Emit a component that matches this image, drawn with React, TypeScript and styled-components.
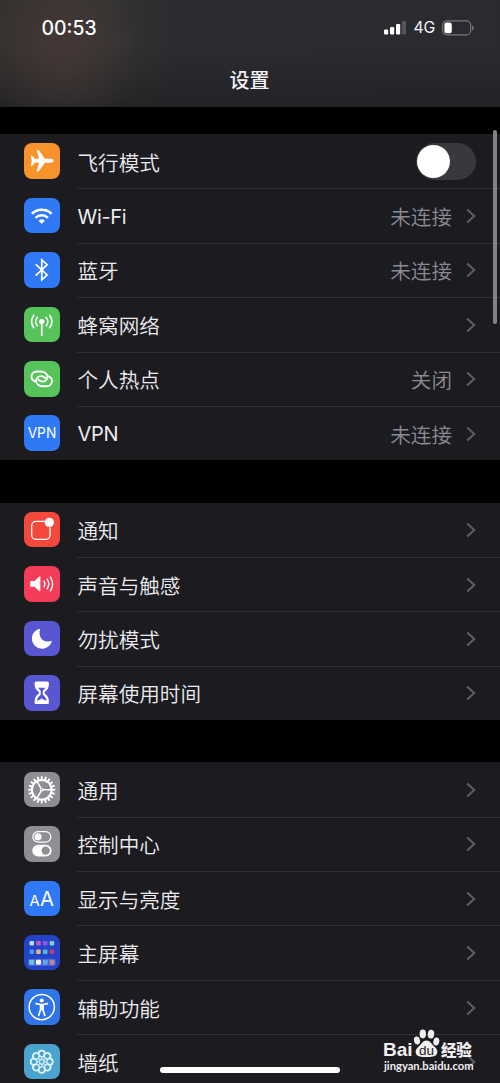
import React from 'react';
import styled, { createGlobalStyle } from 'styled-components';

const GlobalStyle = createGlobalStyle`
  * { box-sizing: border-box; }
  html, body { margin: 0; padding: 0; background: #000; }
  body { font-family: Inter, 'Noto Sans CJK SC', sans-serif; color: #ebebf0; }
`;

const Screen = styled.main`
  position: relative;
  width: 500px;
  height: 1083px;
  overflow: hidden;
  background: #000;
  display: flex;
  flex-direction: column;
`;

const Header = styled.header`
  flex: none;
  height: 107px;
  display: flex;
  flex-direction: column;
  background:
    radial-gradient(ellipse 75px 95px at 64px 48px, rgba(80, 60, 60, 0.6), rgba(80, 60, 60, 0.3) 50%, rgba(80, 60, 60, 0) 100%),
    linear-gradient(180deg, rgba(32, 31, 33, 0) 45%, rgba(32, 31, 33, 0.75) 100%),
    linear-gradient(90deg, #34312f 0, #333331 110px, #2c2b30 175px, #2b2a30 100%);
`;

const StatusBar = styled.div`
  height: 55px;
  padding: 0 26px 0 41.5px;
  display: flex;
  align-items: center;
  justify-content: space-between;
`;

const Clock = styled.span`
  font-size: 19.4px;
  font-weight: 500;
  color: #fff;
  letter-spacing: 0;
`;

const StatusIcons = styled.div`
  display: flex;
  align-items: center;
`;

const Network = styled.span`
  margin: 0 7px 0 7px;
  font-size: 15.8px;
  font-weight: 400;
  letter-spacing: -0.2px;
  color: #f4f4f6;
`;

const Title = styled.h1`
  margin: 10px 1px 0 0;
  text-align: center;
  font-size: 20px;
  line-height: 30px;
  font-weight: 500;
  font-family: 'Noto Sans CJK SC', sans-serif;
  color: #f4f2f8;
`;

const Content = styled.div`
  flex: 1;
  padding-top: 27px;
  display: flex;
  flex-direction: column;
  gap: 42.2px;
`;

const Group = styled.section`
  flex: none;
  background: #1c1b20;
`;

const Row = styled.div`
  height: 54.4px;
  padding-left: 24px;
  display: flex;
  align-items: center;
`;

const Tile = styled.div<{ $color: string }>`
  flex: none;
  width: 35.5px;
  height: 35.5px;
  border-radius: 8px;
  background: ${(p) => p.$color};
  svg { display: block; width: 100%; height: 100%; }
`;

const RowBody = styled.div<{ $line: boolean }>`
  flex: 1;
  align-self: stretch;
  margin-left: 17.5px;
  padding-right: 24px;
  display: flex;
  align-items: center;
  border-top: 1px solid ${(p) => (p.$line ? '#313035' : 'transparent')};
`;

const Label = styled.span<{ $latin?: boolean }>`
  flex: 1;
  padding-top: ${(p) => (p.$latin ? '1px' : '0')};
  font-family: ${(p) => (p.$latin ? 'Inter, sans-serif' : "'Noto Sans CJK SC', sans-serif")};
  font-weight: ${(p) => (p.$latin ? 400 : 350)};
  font-size: ${(p) => (p.$latin ? '20px' : '20.6px')};
  letter-spacing: ${(p) => (p.$latin ? '-0.3px' : '0')};
  line-height: 30px;
  margin-left: 0.5px;
`;

const Value = styled.span`
  margin-right: 14px;
  font-family: 'Noto Sans CJK SC', sans-serif;
  font-weight: 350;
  font-size: 20.6px;
  line-height: 30px;
  color: #8b8a90;
`;

const Switch = styled.div`
  width: 60px;
  height: 37.5px;
  padding: 2px 1px;
  border-radius: 19px;
  background: #39393d;
`;

const Thumb = styled.div`
  width: 33px;
  height: 33px;
  border-radius: 50%;
  background: #fff;
`;

const ScrollThumb = styled.div`
  position: absolute;
  top: 130px;
  right: 3px;
  width: 4px;
  height: 194px;
  border-radius: 2px;
  background: #838287;
`;

const HomeIndicator = styled.div`
  position: absolute;
  left: 160px;
  top: 1067px;
  width: 180px;
  height: 6px;
  border-radius: 3px;
  background: #fff;
`;

const Watermark = styled.div`
  position: absolute;
  left: 383px;
  top: 1029px;
  width: 92px;
  color: #efeff0;
`;

const BrandLine = styled.div`
  display: flex;
  align-items: flex-end;
  height: 30px;
`;

const BrandLatin = styled.span`
  width: 30px;
  font: 700 19px/18px 'Liberation Sans', sans-serif;
  letter-spacing: 0;
`;

const BrandHan = styled.span`
  font: 900 15.5px/19px 'Noto Sans CJK SC', sans-serif;
  letter-spacing: -0.3px;
  margin-left: 1px;
`;

const Paw = styled.svg`
  flex: none;
  width: 27px;
  height: 30px;
`;

const Site = styled.div`
  margin-left: 1px;
  font: 700 11.2px/14px Lato, sans-serif;
  white-space: nowrap;
`;

const Chevron = () => (
  <svg width="10" height="16" viewBox="0 0 10 16" fill="none">
    <path d="M1.2 1.4 8.2 8l-7 6.6" stroke="#5d5c62" strokeWidth="2.1" />
  </svg>
);

const Signal = () => (
  <svg width="23" height="15" viewBox="0 0 23 15" fill="#fff">
    <rect x="1" y="9.5" width="4.2" height="5" rx="1.2" />
    <rect x="7" y="7" width="4.2" height="7.5" rx="1.2" />
    <rect x="13" y="4" width="4.2" height="10.5" rx="1.2" />
    <rect x="18.800" y="1" width="4.2" height="13.500" rx="1.2" fill="#56555a" />
  </svg>
);

const Battery = () => (
  <svg width="32" height="16" viewBox="0 0 32 16">
    <rect x="0.7" y="0.9" width="28" height="14" rx="4.2" fill="none" stroke="#77767b" strokeWidth="1.2" />
    <rect x="2.4" y="2.6" width="7.4" height="10.6" rx="2.2" fill="#fff" />
    <path d="M30 5.6c1.4.6 1.8 1.4 1.8 2.3S31.400 9.700 30 10.300z" fill="#77767b" />
  </svg>
);

const S = { fill: 'none', stroke: '#fff', strokeLinecap: 'round' as const, strokeLinejoin: 'round' as const };

const Airplane = () => (
  <svg viewBox="0 0 36 36">
    <path
      fill="#fff"
      d="M30 18c0-1.300-1.500-2-3.200-2h-5.600L15 7.400h-2.300L15.400 16h-4.600L8.500 13H6.800l1.100 5-1.100 5h1.700l2.300-3h4.600l-2.700 8.600H15L21.200 20h5.600c1.700 0 3.200-.7 3.200-2z"
    />
  </svg>
);

const Wifi = () => (
  <svg viewBox="0 0 36 36">
    <g {...S} strokeWidth="2.600" strokeLinecap="butt">
      <path d="M8 16a14.300 14.300 0 0 1 20 0" />
      <path d="M11.700 20.200a8.900 8.900 0 0 1 12.600 0" />
    </g>
    <path fill="#fff" d="M14.900 23.100a4.500 4.500 0 0 1 6.200 0L18 26.300z" />
  </svg>
);

const Bluetooth = () => (
  <svg viewBox="0 0 36 36">
    <path {...S} strokeWidth="1.700" strokeLinejoin="miter" d="m12.300 12.800 11.200 10.500-5.500 4.900V8l5.500 4.900-11.200 10.500" />
  </svg>
);

const Cellular = () => (
  <svg viewBox="0 0 36 36">
    <circle cx="18" cy="14.800" r="2.700" fill="#fff" />
    <g {...S} strokeWidth="1.700">
      <path d="M18 15v13.600" />
      <path d="M13.500 10.600a6.300 6.300 0 0 0 0 8.400M22.500 10.600a6.300 6.300 0 0 1 0 8.400" />
      <path d="M9.900 8.600a9.800 9.800 0 0 0 0 12.400M26.100 8.600a9.800 9.800 0 0 1 0 12.400" />
    </g>
  </svg>
);

const Hotspot = () => (
  <svg viewBox="0 0 36 36">
    <g {...S} strokeWidth="1.900">
      <path d="M11.600 20.900c-2.400-.8-4-2.700-4-5.100 0-3 2.500-5.200 5.600-5.200h3.600c3.800 0 7 2.400 7 5.500 0 2.800-2.500 4.700-5.100 4.700-1.900 0-3.300-.7-4.300-2" />
      <path d="M24.400 15.300c2.400.8 4 2.700 4 5.100 0 3-2.500 5.200-5.600 5.200h-3.600c-3.800 0-7-2.400-7-5.500 0-2.800 2.500-4.700 5.100-4.700 1.900 0 3.300.7 4.300 2" />
    </g>
  </svg>
);

const Vpn = () => (
  <svg viewBox="0 0 36 36">
    <text x="18.200" y="23.400" textAnchor="middle" fontFamily="Inter, sans-serif" fontSize="15.200" fill="#fff" textLength="29" lengthAdjust="spacingAndGlyphs">
      VPN
    </text>
  </svg>
);

const Notification = () => (
  <svg viewBox="0 0 36 36">
    <path {...S} strokeWidth="1.300" d="M20.500 9.500H12a4.200 4.200 0 0 0-4.200 4.200v9.800a4.200 4.200 0 0 0 4.200 4.200h10.200a4.200 4.200 0 0 0 4.200-4.200V16" />
    <circle cx="25.700" cy="10.500" r="4.700" fill="#fff" />
  </svg>
);

const Sound = () => (
  <svg viewBox="0 0 36 36">
    <path fill="#fff" d="M7.200 15.100h3.600l4.800-4.500c.5-.4 1-.2 1 .5v14c0 .7-.5.900-1 .5l-4.800-4.500H7.200c-.6 0-.9-.3-.9-.9v-4.200c0-.6.3-.9.900-.9z" />
    <g {...S} strokeWidth="1.400">
      <path d="M20.300 15.400a5.300 5.300 0 0 1 0 5.600" />
      <path d="M23.500 13.300a9 9 0 0 1 0 9.800" />
      <path d="M26.800 11.200a13 13 0 0 1 0 14" />
    </g>
  </svg>
);

const Moon = () => (
  <svg viewBox="0 0 36 36">
    <path fill="#fff" d="M15.300 8a10.300 10.300 0 1 0 12.800 13.100c.2-.6-.2-.9-.8-.7-7 2.300-13.300-3.500-11.100-11.500.2-.7-.2-1.100-.9-.9z" />
  </svg>
);

const Hourglass = () => (
  <svg viewBox="0 0 36 36">
    <path
      fill="#fff"
      d="M12.500 6.500h11c1.200 0 1.800.7 1.800 1.900 0 4.500-1.400 6.700-3.800 8.300-.9.700-.9 1.900 0 2.600 2.400 1.600 3.800 3.800 3.800 8.300 0 1.200-.6 1.900-1.800 1.900h-11c-1.200 0-1.800-.7-1.800-1.900 0-4.500 1.400-6.700 3.800-8.300.9-.7.9-1.900 0-2.600-2.400-1.600-3.800-3.800-3.800-8.300 0-1.200.6-1.900 1.800-1.900z"
    />
    <path fill="#5856d0" d="M14.500 13h7c-.6 1.200-1.300 1.900-2 2.500-.7.600-.7 4.300 0 5 1.700 1.300 3 3 3.400 5.500-2-.3-3.200-1-4.900-2.400-1.700 1.400-2.900 2.100-4.900 2.400.4-2.500 1.700-4.200 3.400-5.500.7-.7.7-4.400 0-5-.7-.6-1.400-1.300-2-2.500z" />
  </svg>
);

const GEAR_TEETH = Array.from({ length: 20 }, (_, i) => i * 18);

const Gear = () => (
  <svg viewBox="0 0 36 36" stroke="#fff" fill="none">
    <circle cx="18" cy="18" r="10" strokeWidth="2" />
    {GEAR_TEETH.map((a) => (
      <path key={a} d="M18 7.800V5" strokeWidth="1.900" strokeLinecap="round" transform={`rotate(${a} 18 18)`} />
    ))}
    <circle cx="18" cy="18" r="1.300" strokeWidth="1.200" />
    <path strokeWidth="1.600" d="M19.400 18H28M17.300 16.700 13 9.300M17.300 19.300l-4.300 7.400" />
  </svg>
);

const Controls = () => (
  <svg viewBox="0 0 36 36">
    <rect x="9" y="5.600" width="18.200" height="10.800" rx="5.400" fill="none" stroke="#fff" strokeWidth="1.300" />
    <circle cx="14.300" cy="11" r="3.600" fill="#fff" />
    <rect x="8.400" y="19" width="19.600" height="12" rx="6" fill="#fff" />
    <circle cx="22" cy="25" r="4.200" fill="#8e8e93" />
  </svg>
);

const TextSize = () => (
  <svg viewBox="0 0 36 36" fontFamily="Inter, sans-serif" fill="#fff">
    <text x="5.700" y="25.300" fontSize="15" fontWeight="400">A</text>
    <text x="16.300" y="25.300" fontSize="20.500" fontWeight="400">A</text>
  </svg>
);

const APP_DOTS = [
  ['#b9dcea', '#c45bc4', '#8a5ce6', '#8cc9c0'],
  ['#4a9af0', '#e5b783', '#54b9d8', '#c23b72'],
];

const HomeScreen = () => (
  <svg viewBox="0 0 36 36">
    {APP_DOTS.map((line, r) =>
      line.map((c, i) => <rect key={c} x={5.600 + i * 6.800} y={6 + r * 8.700} width="4.600" height="4.600" rx="1" fill={c} />)
    )}
    <rect x="4" y="24" width="28" height="7.400" rx="1.800" fill="#4a62d2" />
    {['#6cc8cf', '#f2f4fb', '#62a4ee', '#b88c8c'].map((c, i) => (
      <rect key={c} x={5.300 + i * 6.900} y="25.200" width="5" height="5" rx="1" fill={c} />
    ))}
  </svg>
);

const Accessibility = () => (
  <svg viewBox="0 0 36 36">
    <circle cx="18" cy="18.300" r="12.800" fill="none" stroke="#fff" strokeWidth="1.500" />
    <circle cx="18" cy="11.700" r="2.100" fill="#fff" />
    <path {...S} strokeWidth="1.700" d="m12.300 14.900 4.200.8h3l4.200-.8M16.800 16.600v4.400l-1.900 5.800M19.200 16.600v4.400l1.900 5.800" />
    <path fill="#fff" d="M16.200 15.400h3.600v6.200h-3.600z" />
  </svg>
);

const PETALS = [0, 45, 90, 135, 180, 225, 270, 315];

const Flower = () => (
  <svg viewBox="0 0 36 36">
    {PETALS.map((a) => (
      <circle key={a} cx="18" cy="10" r="3.200" fill="#4ba3cf" stroke="#e0f6fc" strokeWidth="1.800" transform={`rotate(${a} 18 18)`} />
    ))}
    <circle cx="18" cy="18" r="5.500" fill="#bfe6f2" />
    {PETALS.map((a) => (
      <circle key={a} cx="18" cy="14" r="0.900" fill="#4ba3cf" transform={`rotate(${a + 22.5} 18 18)`} />
    ))}
    <circle cx="18" cy="18" r="1.600" fill="#4ba3cf" />
  </svg>
);

type Item = { label: string; color: string; Icon: React.FC; value?: string; toggle?: boolean; latin?: boolean };

const GROUPS: Item[][] = [
  [
    { label: '飞行模式', color: '#f7932c', Icon: Airplane, toggle: true },
    { label: 'Wi-Fi', color: '#2f79f6', Icon: Wifi, value: '未连接', latin: true },
    { label: '蓝牙', color: '#2f79f6', Icon: Bluetooth, value: '未连接' },
    { label: '蜂窝网络', color: '#57c35b', Icon: Cellular },
    { label: '个人热点', color: '#57c35b', Icon: Hotspot, value: '关闭' },
    { label: 'VPN', color: '#2f79f6', Icon: Vpn, value: '未连接', latin: true },
  ],
  [
    { label: '通知', color: '#f4483c', Icon: Notification },
    { label: '声音与触感', color: '#f53c5a', Icon: Sound },
    { label: '勿扰模式', color: '#5856d0', Icon: Moon },
    { label: '屏幕使用时间', color: '#5856d0', Icon: Hourglass },
  ],
  [
    { label: '通用', color: '#8e8e93', Icon: Gear },
    { label: '控制中心', color: '#8e8e93', Icon: Controls },
    { label: '显示与亮度', color: '#2f79f6', Icon: TextSize },
    { label: '主屏幕', color: '#2343c8', Icon: HomeScreen },
    { label: '辅助功能', color: '#2f75e8', Icon: Accessibility },
    { label: '墙纸', color: '#4ba3cf', Icon: Flower },
  ],
];

const SettingRow = ({ item, line }: { item: Item; line: boolean }) => (
  <Row>
    <Tile $color={item.color}>
      <item.Icon />
    </Tile>
    <RowBody $line={line}>
      <Label $latin={item.latin}>{item.label}</Label>
      {item.value && <Value>{item.value}</Value>}
      {item.toggle ? (
        <Switch>
          <Thumb />
        </Switch>
      ) : (
        <Chevron />
      )}
    </RowBody>
  </Row>
);

export default function App() {
  return (
    <>
      <GlobalStyle />
      <Screen>
        <Header>
          <StatusBar>
            <Clock>00:53</Clock>
            <StatusIcons>
              <Signal />
              <Network>4G</Network>
              <Battery />
            </StatusIcons>
          </StatusBar>
          <Title>设置</Title>
        </Header>
        <Content>
          {GROUPS.map((items) => (
            <Group key={items[0].label}>
              {items.map((item, i) => (
                <SettingRow key={item.label} item={item} line={i > 0} />
              ))}
            </Group>
          ))}
        </Content>
        <ScrollThumb />
        <HomeIndicator />
        <Watermark>
          <BrandLine>
            <BrandLatin>Bai</BrandLatin>
            <Paw viewBox="0 0 27 30" fill="#efeff0">
              <ellipse cx="9.800" cy="5" rx="3.200" ry="4.400" />
              <ellipse cx="18" cy="5.200" rx="3.200" ry="4.400" transform="rotate(8 18 5)" />
              <ellipse cx="4" cy="11.500" rx="3" ry="4" transform="rotate(-12 4 11.500)" />
              <ellipse cx="23.300" cy="12.500" rx="3" ry="4" transform="rotate(12 23.300 12.500)" />
              <path d="M13.500 11.500c3.500 0 4.500 3 7 5.200 2.800 2.500 4.500 4.500 3.700 7.300-1 3.500-5 4.200-10.700 4-5.700.2-9.700-.5-10.700-4-.8-2.800.9-4.800 3.700-7.300 2.500-2.200 3.500-5.200 7-5.200z" />
              <text x="13.500" y="26" textAnchor="middle" fontFamily="Liberation Sans, sans-serif" fontSize="13.500" fontWeight="400" fill="#1c1b20">
                du
              </text>
            </Paw>
            <BrandHan>经验</BrandHan>
          </BrandLine>
          <Site>jingyan.baidu.com</Site>
        </Watermark>
      </Screen>
    </>
  );
}
